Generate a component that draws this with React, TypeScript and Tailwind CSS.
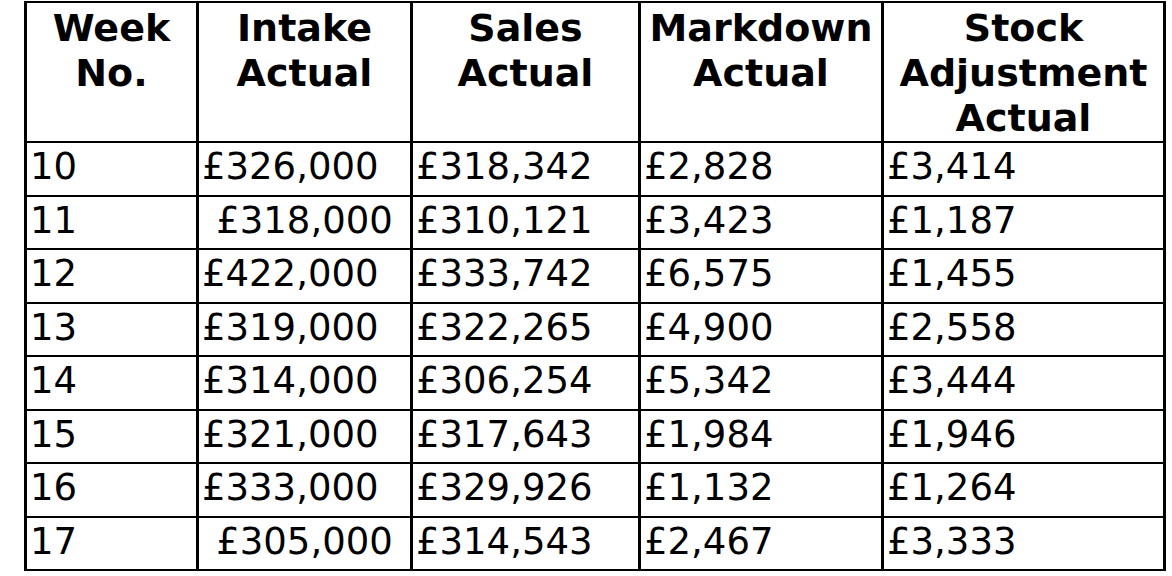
import React from "react";

type Row = {
  week: string;
  intake: string;
  sales: string;
  markdown: string;
  stock: string;
  centerIntake?: boolean;
};

const rows: Row[] = [
  { week: "10", intake: "£326,000", sales: "£318,342", markdown: "£2,828", stock: "£3,414" },
  { week: "11", intake: "£318,000", sales: "£310,121", markdown: "£3,423", stock: "£1,187", centerIntake: true },
  { week: "12", intake: "£422,000", sales: "£333,742", markdown: "£6,575", stock: "£1,455" },
  { week: "13", intake: "£319,000", sales: "£322,265", markdown: "£4,900", stock: "£2,558" },
  { week: "14", intake: "£314,000", sales: "£306,254", markdown: "£5,342", stock: "£3,444" },
  { week: "15", intake: "£321,000", sales: "£317,643", markdown: "£1,984", stock: "£1,946" },
  { week: "16", intake: "£333,000", sales: "£329,926", markdown: "£1,132", stock: "£1,264" },
  { week: "17", intake: "£305,000", sales: "£314,543", markdown: "£2,467", stock: "£3,333", centerIntake: true },
];

const headers = [
  ["Week", "No."],
  ["Intake", "Actual"],
  ["Sales", "Actual"],
  ["Markdown", "Actual"],
  ["Stock", "Adjustment", "Actual"],
];

const th =
  "border-y-2 border-x-[3px] border-black align-top text-center font-bold text-[38px] leading-[45px] pt-[3px] px-0";
const cell = "border-y-2 border-x-[3px] border-black align-top text-[37px] leading-[43px] pt-[2px] pr-0";
const td = cell + " text-left pl-[3px]";
const tdCenter = cell + " text-center pl-0";

export default function App() {
  return (
    <div className="bg-white w-[1172px] h-[576px] overflow-hidden pt-[1px] pl-[24px] text-black font-['DejaVu_Sans',sans-serif]">
      <table className="border-collapse table-fixed w-[1139px]">
        <colgroup>
          <col className="w-[172px]" />
          <col className="w-[214px]" />
          <col className="w-[228px]" />
          <col className="w-[243px]" />
          <col className="w-[282px]" />
        </colgroup>
        <thead>
          <tr className="h-[138px]">
            {headers.map((lines, i) => (
              <th key={i} className={th}>
                {lines.map((l) => (
                  <div key={l}>{l}</div>
                ))}
              </th>
            ))}
          </tr>
        </thead>
        <tbody>
          {rows.map((r, i) => (
            <tr key={r.week} className={i % 2 === 0 ? "h-[54px]" : "h-[53px]"}>
              <td className={td}>{r.week}</td>
              <td className={r.centerIntake ? tdCenter : td}>{r.intake}</td>
              <td className={td}>{r.sales}</td>
              <td className={td}>{r.markdown}</td>
              <td className={td}>{r.stock}</td>
            </tr>
          ))}
        </tbody>
      </table>
    </div>
  );
}
